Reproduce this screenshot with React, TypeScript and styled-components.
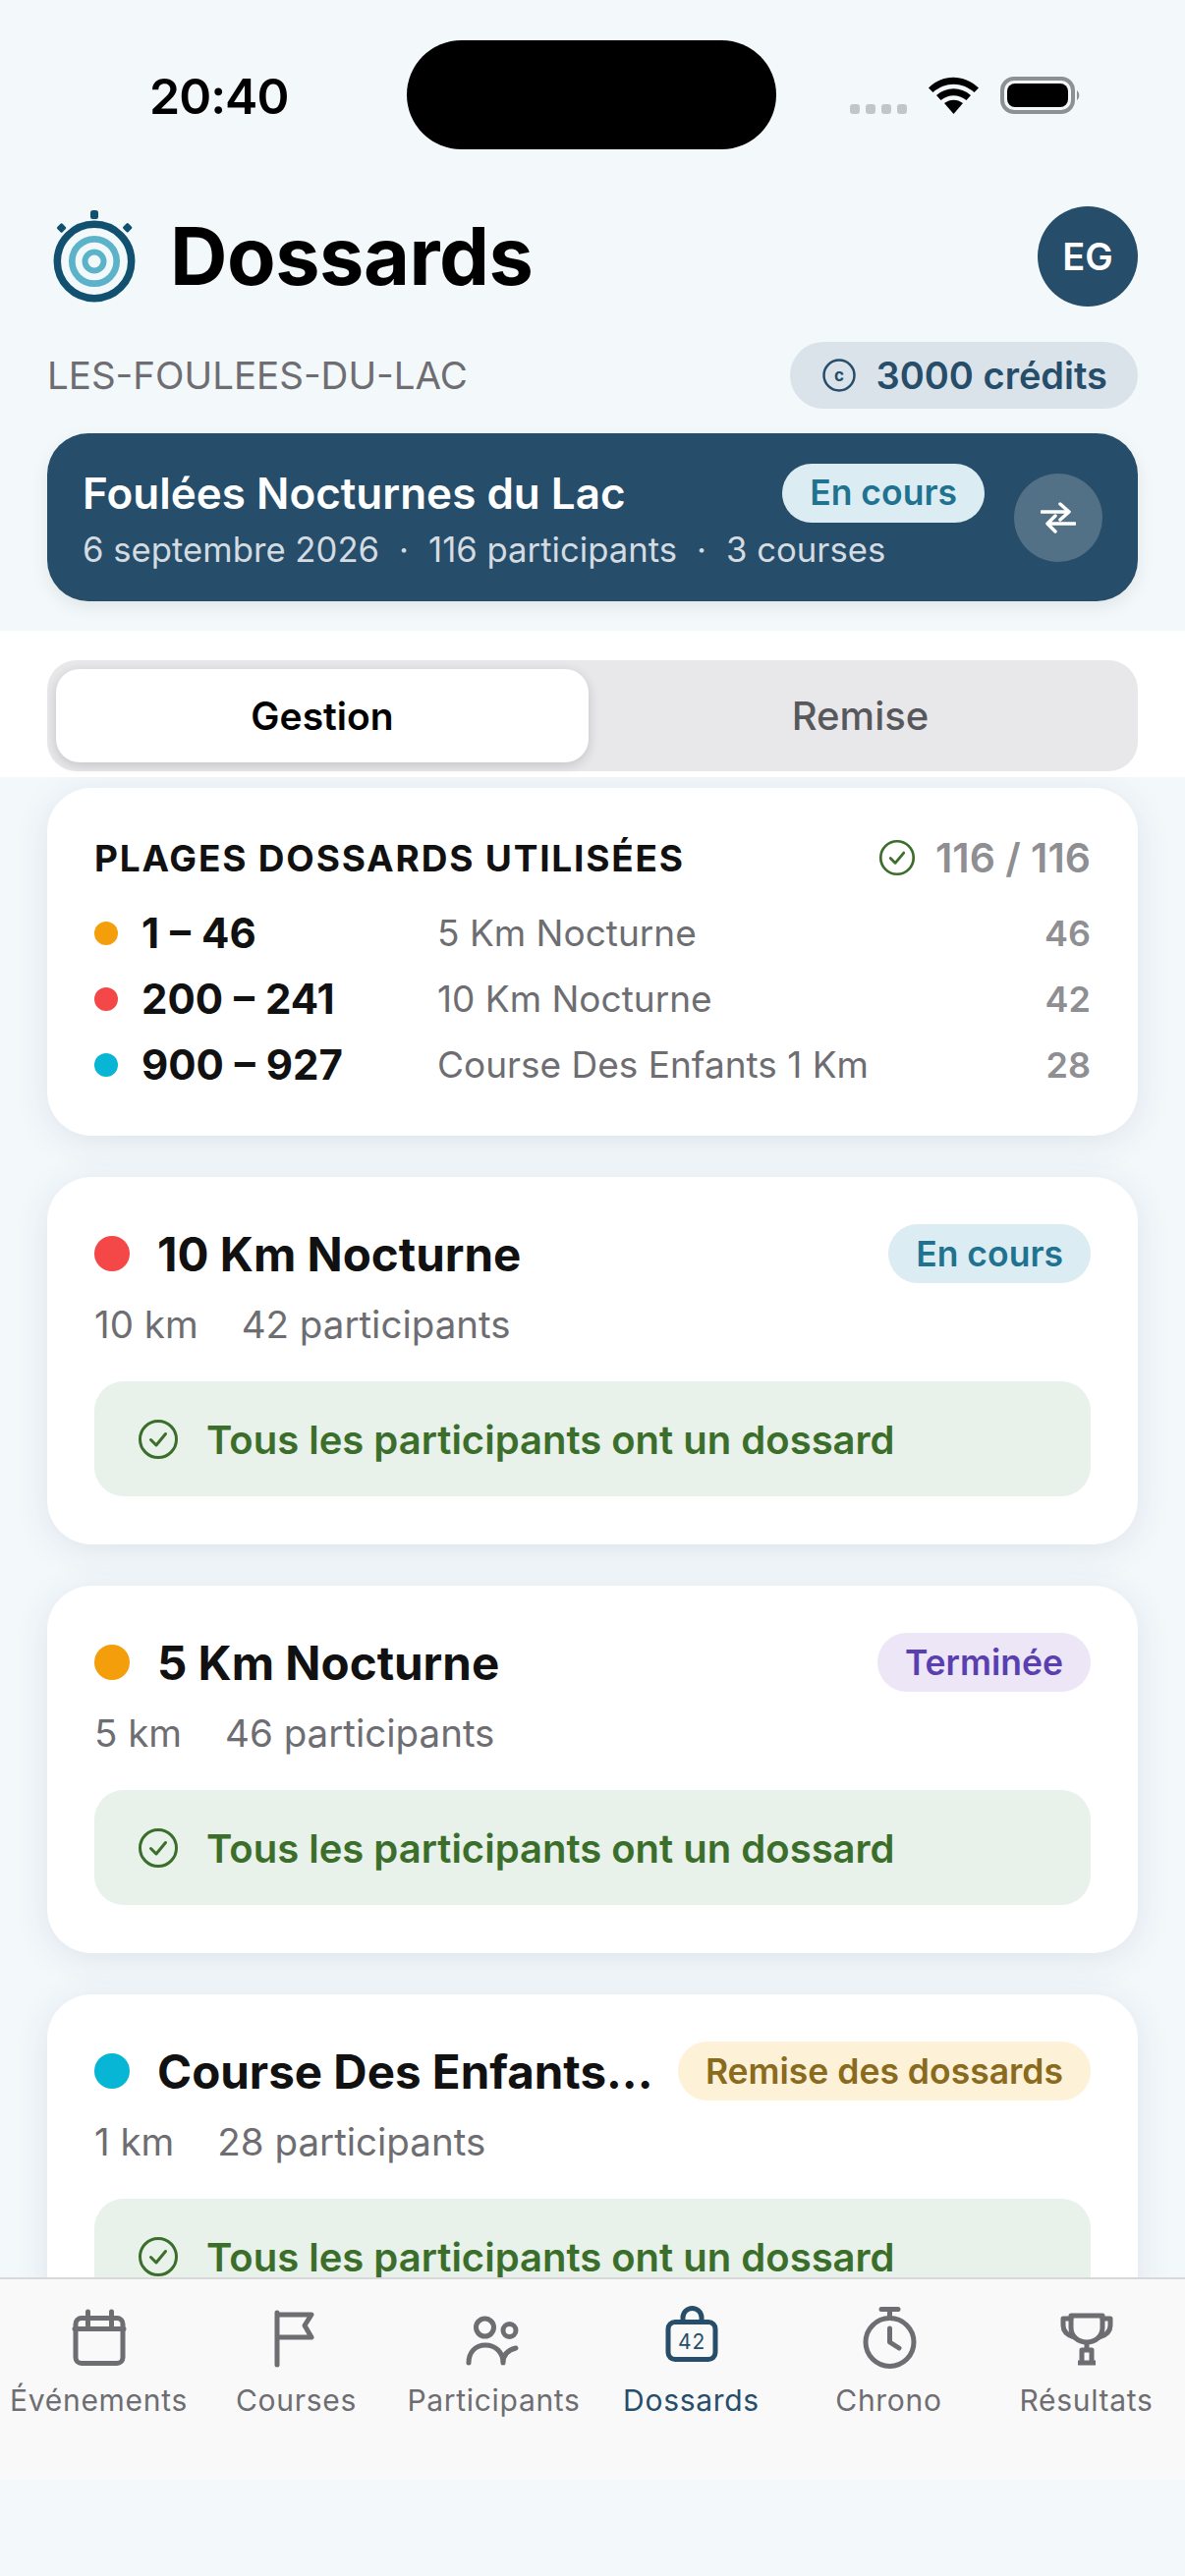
import styled, { createGlobalStyle } from 'styled-components';

const GlobalStyle = createGlobalStyle`
  html, body {
    margin: 0;
    padding: 0;
    background: #f3f8fb;
  }
  * {
    box-sizing: border-box;
  }
`;

const Screen = styled.div`
  width: 1206px;
  height: 2622px;
  display: flex;
  flex-direction: column;
  overflow: hidden;
  background: #f3f8fb;
  font-family: Inter, "Noto Sans", sans-serif;
  color: #000;
`;

const StatusBar = styled.div`
  display: flex;
  align-items: center;
  height: 111px;
  margin-top: 41px;
`;

const Time = styled.div`
  width: 414px;
  padding-left: 152px;
  padding-top: 2px;
  font-size: 50px;
  font-weight: 600;
  letter-spacing: -1px;
`;

const Island = styled.div`
  width: 376px;
  height: 111px;
  border-radius: 56px;
  background: #000;
`;

const StatusIcons = styled.svg`
  margin-left: 75px;
`;

const Hero = styled.div`
  padding: 58px 48px 30px;
`;

const TitleRow = styled.div`
  display: flex;
  align-items: center;
  height: 102px;
`;

const Logo = styled.svg`
  margin-left: 3px;
  margin-top: 2px;
  flex: none;
`;

const Title = styled.h1`
  flex: 1;
  margin: 0 0 0 32px;
  font-size: 81px;
  font-weight: 700;
  letter-spacing: -0.5px;
`;

const Avatar = styled.div`
  width: 102px;
  height: 102px;
  border-radius: 50%;
  display: flex;
  align-items: center;
  justify-content: center;
  background: #264d69;
  color: #fff;
  font-size: 38px;
  font-weight: 600;
`;

const SlugRow = styled.div`
  display: flex;
  align-items: center;
  justify-content: space-between;
  margin-top: 36px;
`;

const Slug = styled.div`
  font-size: 38.5px;
  color: #6d6d72;
`;

const Credits = styled.div`
  display: flex;
  align-items: center;
  gap: 21px;
  height: 68px;
  padding: 0 31px 0 33px;
  border-radius: 34px;
  background: #dbe3ea;
  color: #264d69;
  font-size: 38px;
  font-weight: 600;
`;

const EventCard = styled.div`
  display: flex;
  align-items: center;
  height: 171px;
  margin-top: 25px;
  padding: 0 36px;
  border-radius: 42px;
  background: #264d69;
  box-shadow: 0 6px 18px rgba(0, 0, 0, 0.08);
`;

const EventInfo = styled.div`
  flex: 1;
  margin-top: -2px;
`;

const EventTopRow = styled.div`
  display: flex;
  align-items: center;
  justify-content: space-between;
`;

const EventName = styled.div`
  font-size: 44px;
  font-weight: 600;
  color: #fff;
`;

const EventMeta = styled.div`
  display: flex;
  gap: 20px;
  margin-top: 6px;
  font-size: 34.7px;
  color: #d4dbe1;
`;

const SwapButton = styled.div`
  flex: none;
  width: 90px;
  height: 90px;
  margin-left: 30px;
  border-radius: 50%;
  display: flex;
  align-items: center;
  justify-content: center;
  background: #527086;
`;

const Pill = styled.div<{ $bg: string; $fg: string }>`
  flex: none;
  display: flex;
  align-items: center;
  height: 60px;
  padding: 0 28px;
  border-radius: 30px;
  background: ${({ $bg }) => $bg};
  color: ${({ $fg }) => $fg};
  font-size: 35.5px;
  font-weight: 600;
`;

const TabsBand = styled.div`
  padding: 30px 48px 6px;
  background: #fff;
`;

const Segmented = styled.div`
  display: grid;
  grid-template-columns: 542px 1fr;
  height: 113px;
  padding: 9px;
  border-radius: 30px;
  background: #e8e8ea;
`;

const Segment = styled.div<{ $active?: boolean }>`
  display: flex;
  align-items: center;
  justify-content: center;
  padding-left: ${({ $active }) => ($active ? '0' : '3px')};
  border-radius: 24px;
  font-size: ${({ $active }) => ($active ? '39px' : '40px')};
  font-weight: ${({ $active }) => ($active ? 600 : 500)};
  color: ${({ $active }) => ($active ? '#000' : '#58585c')};
  background: ${({ $active }) => ($active ? '#fff' : 'transparent')};
  box-shadow: ${({ $active }) => ($active ? '0 3px 12px rgba(0, 0, 0, 0.16)' : 'none')};
`;

const Scroll = styled.div`
  flex: 1;
  min-height: 0;
  overflow: hidden;
  display: flex;
  flex-direction: column;
  gap: 42px;
  padding: 11px 48px 0;
`;

const Card = styled.div`
  flex: none;
  padding: 48px 48px 49px;
  border-radius: 45px;
  background: #fff;
  box-shadow: 0 6px 36px rgba(30, 60, 90, 0.1);
`;

const RangesCard = styled(Card)`
  height: 354px;
  padding: 48px;
`;

const RangesHeader = styled.div`
  display: flex;
  align-items: center;
  justify-content: space-between;
  height: 46px;
`;

const RangesTitle = styled.div`
  font-size: 37px;
  font-weight: 700;
  letter-spacing: 1.8px;
  color: #111;
`;

const RangesTotal = styled.div`
  display: flex;
  align-items: center;
  gap: 20px;
  font-size: 41px;
  font-weight: 600;
  color: #8e8e93;
`;

const RangeList = styled.div`
  display: flex;
  flex-direction: column;
  gap: 21px;
  margin-top: 28px;
`;

const RangeRow = styled.div`
  display: grid;
  grid-template-columns: 48px 301px 1fr auto;
  align-items: center;
  height: 46px;
`;

const RangeDot = styled.span<{ $color: string }>`
  width: 24px;
  height: 24px;
  border-radius: 50%;
  background: ${({ $color }) => $color};
`;

const RangeValue = styled.span`
  font-size: 42px;
  font-weight: 700;
  word-spacing: 1px;
  color: #111;
`;

const RangeLabel = styled.span`
  font-size: 37px;
  color: #6d6d72;
`;

const RangeCount = styled.span`
  font-size: 36px;
  font-weight: 600;
  color: #8e8e93;
`;

const RaceHeader = styled.div`
  display: flex;
  align-items: center;
  gap: 28px;
  height: 60px;
`;

const RaceDot = styled.span<{ $color: string }>`
  flex: none;
  width: 36px;
  height: 36px;
  border-radius: 50%;
  background: ${({ $color }) => $color};
`;

const RaceName = styled.div`
  flex: 1;
  min-width: 0;
  font-size: 47.5px;
  font-weight: 700;
  color: #111;
  white-space: nowrap;
`;

const RaceMeta = styled.div`
  display: flex;
  gap: 44px;
  margin-top: 19px;
  font-size: 38.5px;
  color: #6d6d72;
`;

const Notice = styled.div`
  display: flex;
  align-items: center;
  gap: 28px;
  height: 117px;
  margin-top: 35px;
  padding: 0 44px;
  border-radius: 30px;
  background: #e8f1ea;
  color: #3c6e2b;
  font-size: 40px;
  font-weight: 600;
`;

const NoticeText = styled.span`
  padding-top: 2px;
`;

const TabBar = styled.nav`
  flex: none;
  display: grid;
  grid-template-columns: repeat(6, 1fr);
  height: 206px;
  padding-top: 25px;
  border-top: 2px solid #d8d8da;
  background: #f9f9f9;
`;

const TabItem = styled.div<{ $active?: boolean }>`
  display: flex;
  flex-direction: column;
  align-items: center;
  gap: 8px;
  font-size: 30px;
  letter-spacing: 0.7px;
  color: ${({ $active }) => ($active ? '#264d69' : '#6d6d72')};
`;

const BottomSpace = styled.div`
  flex: none;
  height: 98px;
`;

const CheckCircle = ({ size, color }: { size: number; color: string }) => (
  <svg width={size} height={size} viewBox="0 0 42 42" fill="none" stroke={color} strokeWidth="3" strokeLinecap="round" strokeLinejoin="round">
    <circle cx="21" cy="21" r="18.5" />
    <path d="M13.5 21.5 L19 27 L28.5 15.5" />
  </svg>
);

const TabIcon = ({ children }: { children: React.ReactNode }) => (
  <svg width="72" height="72" viewBox="0 0 72 72" fill="none" stroke="currentColor" strokeWidth="5" strokeLinecap="round" strokeLinejoin="round">
    {children}
  </svg>
);

const races = [
  { name: '10 Km Nocturne', color: '#f44747', distance: '10 km', count: '42 participants', pill: 'En cours', bg: '#dcecf3', fg: '#1f7391' },
  { name: '5 Km Nocturne', color: '#f59e0b', distance: '5 km', count: '46 participants', pill: 'Terminée', bg: '#ece6f7', fg: '#5a3fb0' },
  { name: 'Course Des Enfants...', color: '#06b6d4', distance: '1 km', count: '28 participants', pill: 'Remise des dossards', bg: '#fdf2d8', fg: '#8a6a1c' },
];

const ranges = [
  { value: '1 – 46', label: '5 Km Nocturne', count: 46, color: '#f59e0b' },
  { value: '200 – 241', label: '10 Km Nocturne', count: 42, color: '#f44747' },
  { value: '900 – 927', label: 'Course Des Enfants 1 Km', count: 28, color: '#06b6d4' },
];

export default function App() {
  return (
    <>
      <GlobalStyle />
      <Screen>
        <StatusBar>
          <Time>20:40</Time>
          <Island />
          <StatusIcons width="235" height="38" viewBox="0 0 235 38">
            <g fill="#c3c6c9">
              <rect x="0" y="28" width="10" height="10" rx="3" />
              <rect x="16" y="28" width="10" height="10" rx="3" />
              <rect x="32" y="28" width="10" height="10" rx="3" />
              <rect x="48" y="28" width="10" height="10" rx="3" />
            </g>
            <path d="M80 11.5 C94 -3 116 -3 131 11.5 L126.500 16 C114 5 97 5 84.500 16 Z" fill="#000" />
            <path d="M88 19 C98 10 113 10 123 19 L118.500 24 C110.500 17.500 100.500 17.500 92.500 24 Z" fill="#000" />
            <path d="M96 27 C102 22.500 109 22.500 115 27 L105.500 38 Z" fill="#000" />
            <rect x="155" y="2" width="72" height="34" rx="12" fill="none" stroke="#8e9194" strokeWidth="4" />
            <rect x="160" y="7" width="62" height="24" rx="8" fill="#000" />
            <path d="M231 14 C234 16 234 22 231 24 Z" fill="#8e9194" />
          </StatusIcons>
        </StatusBar>

        <Hero>
          <TitleRow>
            <Logo width="90" height="100" viewBox="0 0 90 100">
              <rect x="41" y="2" width="8" height="9" rx="2.500" fill="#11506f" />
              <rect x="8" y="16" width="7.500" height="7.500" rx="1.500" fill="#11506f" transform="rotate(45 11.300 19.700)" />
              <rect x="75" y="16" width="7.500" height="7.500" rx="1.500" fill="#11506f" transform="rotate(45 78.700 19.700)" />
              <circle cx="45" cy="54" r="37.700" fill="none" stroke="#11506f" strokeWidth="7.500" />
              <circle cx="45" cy="54" r="22.700" fill="none" stroke="#5cb3c9" strokeWidth="6.700" />
              <circle cx="45" cy="54" r="9.500" fill="none" stroke="#5cb3c9" strokeWidth="6" />
            </Logo>
            <Title>Dossards</Title>
            <Avatar>EG</Avatar>
          </TitleRow>

          <SlugRow>
            <Slug>LES-FOULEES-DU-LAC</Slug>
            <Credits>
              <svg width="34" height="34" viewBox="0 0 34 34" fill="none">
                <circle cx="17" cy="17" r="15.500" stroke="#264d69" strokeWidth="2.500" />
                <text x="17" y="22.500" textAnchor="middle" fontSize="17" fontWeight="700" fill="#264d69">c</text>
              </svg>
              3000 crédits
            </Credits>
          </SlugRow>

          <EventCard>
            <EventInfo>
              <EventTopRow>
                <EventName>Foulées Nocturnes du Lac</EventName>
                <Pill $bg="#dcecf3" $fg="#1f7391">En cours</Pill>
              </EventTopRow>
              <EventMeta>
                <span>6 septembre 2026</span>
                <span>·</span>
                <span>116 participants</span>
                <span>·</span>
                <span>3 courses</span>
              </EventMeta>
            </EventInfo>
            <SwapButton>
              <svg width="36" height="36" viewBox="0 0 36 36" fill="none" stroke="#fff" strokeWidth="3.500" strokeLinecap="round" strokeLinejoin="round">
                <path d="M1 12 H29 M20 4 L29 12 L20 20" />
                <path d="M35 24 H7 M15 16 L7 24 L15 32" />
              </svg>
            </SwapButton>
          </EventCard>
        </Hero>

        <TabsBand>
          <Segmented>
            <Segment $active>Gestion</Segment>
            <Segment>Remise</Segment>
          </Segmented>
        </TabsBand>

        <Scroll>
          <RangesCard>
            <RangesHeader>
              <RangesTitle>PLAGES DOSSARDS UTILISÉES</RangesTitle>
              <RangesTotal>
                <CheckCircle size={38} color="#3c6e2b" />
                116 / 116
              </RangesTotal>
            </RangesHeader>
            <RangeList>
              {ranges.map((r) => (
                <RangeRow key={r.value}>
                  <RangeDot $color={r.color} />
                  <RangeValue>{r.value}</RangeValue>
                  <RangeLabel>{r.label}</RangeLabel>
                  <RangeCount>{r.count}</RangeCount>
                </RangeRow>
              ))}
            </RangeList>
          </RangesCard>

          {races.map((race) => (
            <Card key={race.name}>
              <RaceHeader>
                <RaceDot $color={race.color} />
                <RaceName>{race.name}</RaceName>
                <Pill $bg={race.bg} $fg={race.fg}>{race.pill}</Pill>
              </RaceHeader>
              <RaceMeta>
                <span>{race.distance}</span>
                <span>{race.count}</span>
              </RaceMeta>
              <Notice>
                <CheckCircle size={42} color="#3c6e2b" />
                <NoticeText>Tous les participants ont un dossard</NoticeText>
              </Notice>
            </Card>
          ))}
        </Scroll>

        <TabBar>
          <TabItem>
            <TabIcon>
              <rect x="12" y="14.500" width="48" height="46" rx="6" />
              <path d="M11 25.500 H61 M24.500 8 V22 M48.500 8 V22" />
            </TabIcon>
            Événements
          </TabItem>
          <TabItem>
            <TabIcon>
              <path d="M16 9 V62 M16 11 H51 L44 22 L51 34 H16" />
            </TabIcon>
            Courses
          </TabItem>
          <TabItem>
            <TabIcon>
              <circle cx="26.500" cy="24" r="9" />
              <circle cx="51.500" cy="27" r="6.500" />
              <path d="M10 60 C10 49 17 42 27 42 C37 42 45 49 45 60 C45 52 50 47 58 45" />
            </TabIcon>
            Participants
          </TabItem>
          <TabItem $active>
            <TabIcon>
              <rect x="12" y="18.500" width="48" height="38" rx="7" />
              <path d="M27 17 V14 A9.500 9.500 0 0 1 46 14 V17" />
              <text x="36" y="46" textAnchor="middle" fontSize="21" fontWeight="400" fill="currentColor" stroke="none">42</text>
            </TabIcon>
            Dossards
          </TabItem>
          <TabItem>
            <TabIcon>
              <circle cx="36.500" cy="39" r="24.500" />
              <path d="M28 5.500 H45 M36.500 6 V14 M36.500 25 V39 L46 45" />
            </TabIcon>
            Chrono
          </TabItem>
          <TabItem>
            <TabIcon>
              <path d="M20 12 H52 V24 C52 33 45 39 36 39 C27 39 20 33 20 24 Z" />
              <path d="M20 15 H12 V22 C12 28 17 32 23 34 M52 15 H60 V22 C60 28 55 32 49 34" />
              <path d="M36 39 V46 M31 60 V47 H41 V60 M27 60 H45" strokeLinecap="butt" />
            </TabIcon>
            Résultats
          </TabItem>
        </TabBar>
        <BottomSpace />
      </Screen>
    </>
  );
}
